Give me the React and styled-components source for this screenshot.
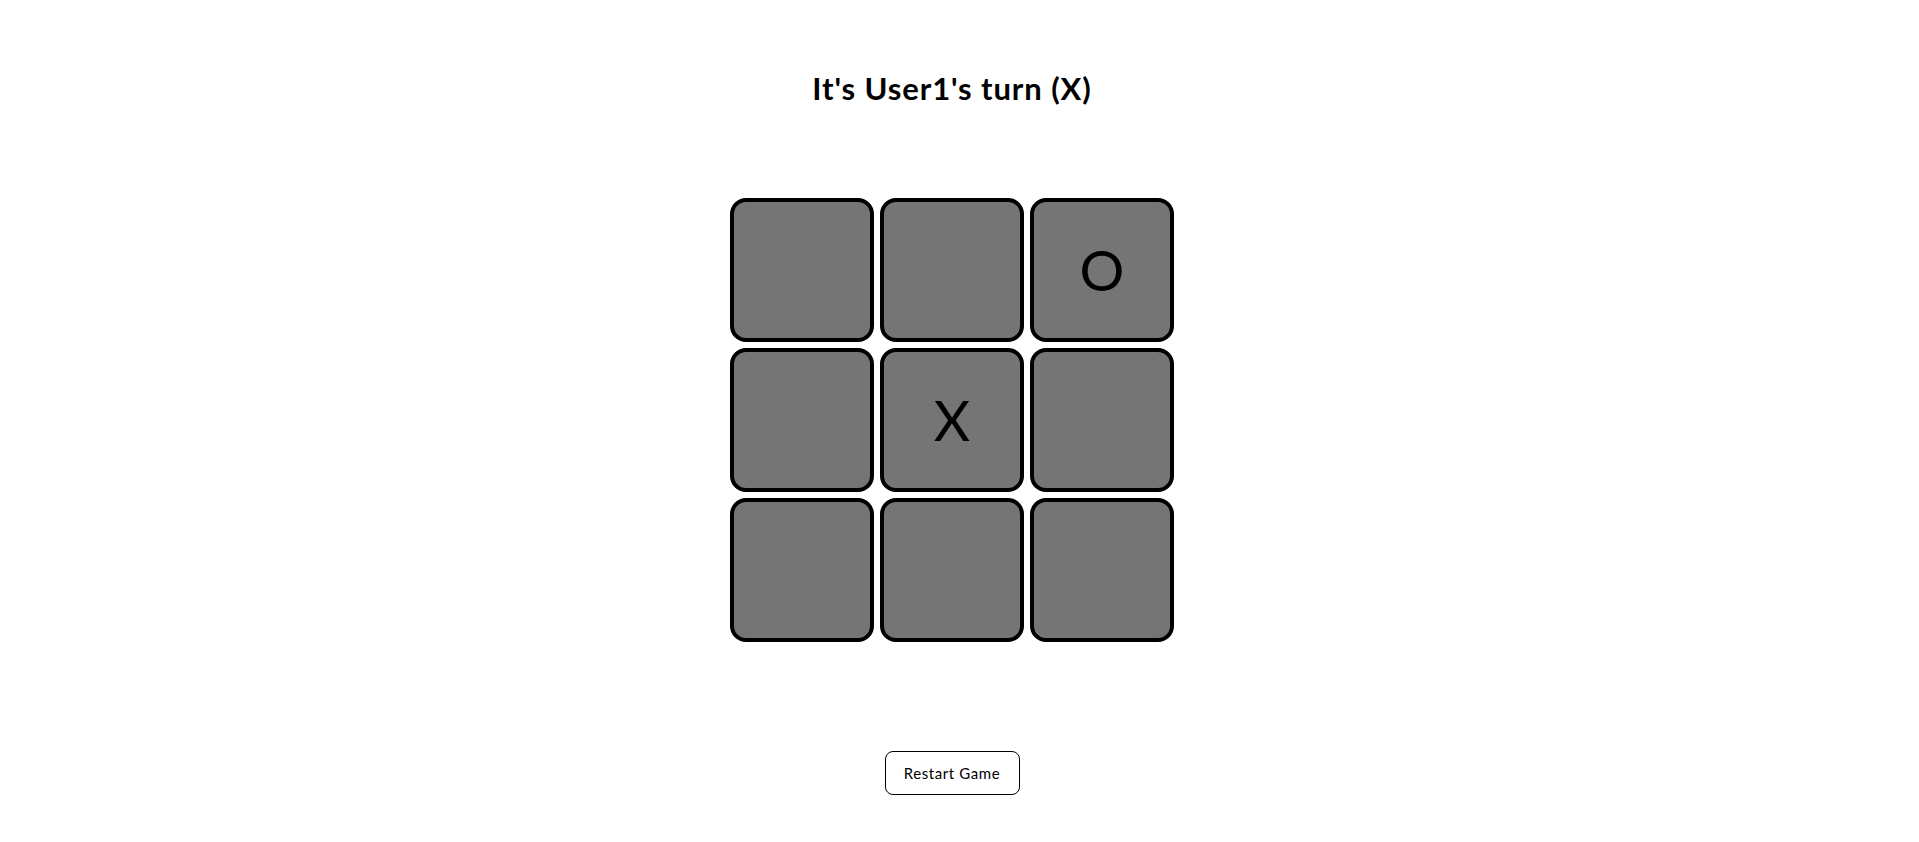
import React, { useState } from "react";
import styled, { createGlobalStyle } from "styled-components";

const GlobalStyle = createGlobalStyle`
  html, body {
    background: #ffffff;
  }
  body {
    margin: 8px;
    font-family: "Lato", "Noto Sans", sans-serif;
    color: #000;
  }
`;

const Page = styled.div`
  min-height: 100vh;
  padding-right: 15px;
  display: flex;
  flex-direction: column;
  align-items: center;
`;

const Title = styled.h1`
  margin: 62px 0 0;
  font-family: "Lato", "Noto Sans", sans-serif;
  font-weight: 700;
  font-size: 31px;
  line-height: 36px;
  letter-spacing: 0.9px;
  color: #000;
`;

const Board = styled.div`
  margin-top: 92px;
  display: grid;
  grid-template-columns: repeat(3, 144px);
  grid-template-rows: repeat(3, 144px);
  gap: 6px;
`;

const Cell = styled.button`
  box-sizing: border-box;
  width: 144px;
  height: 144px;
  padding: 0;
  background: #757575;
  border: 4px solid #000;
  border-radius: 16px;
  display: flex;
  align-items: center;
  justify-content: center;
  font-family: "Lato", "Noto Sans", sans-serif;
  font-weight: 400;
  font-size: 56px;
  line-height: 1;
  color: #000;
  cursor: pointer;
`;

const RestartButton = styled.button`
  margin-top: 109px;
  box-sizing: border-box;
  width: 135px;
  height: 44px;
  background: #fff;
  border: 1px solid #000;
  border-radius: 8px;
  font-family: "Lato", "Noto Sans", sans-serif;
  font-size: 15px;
  letter-spacing: 0.6px;
  color: #000;
  cursor: pointer;
`;

const initial = ["", "", "O", "", "X", "", "", "", ""];

export default function App() {
  const [cells, setCells] = useState(initial);
  return (
    <>
      <GlobalStyle />
      <Page>
        <Title>It's User1's turn (X)</Title>
        <Board>
          {cells.map((v, i) => (
            <Cell key={i}>{v}</Cell>
          ))}
        </Board>
        <RestartButton onClick={() => setCells(initial)}>Restart Game</RestartButton>
      </Page>
    </>
  );
}
